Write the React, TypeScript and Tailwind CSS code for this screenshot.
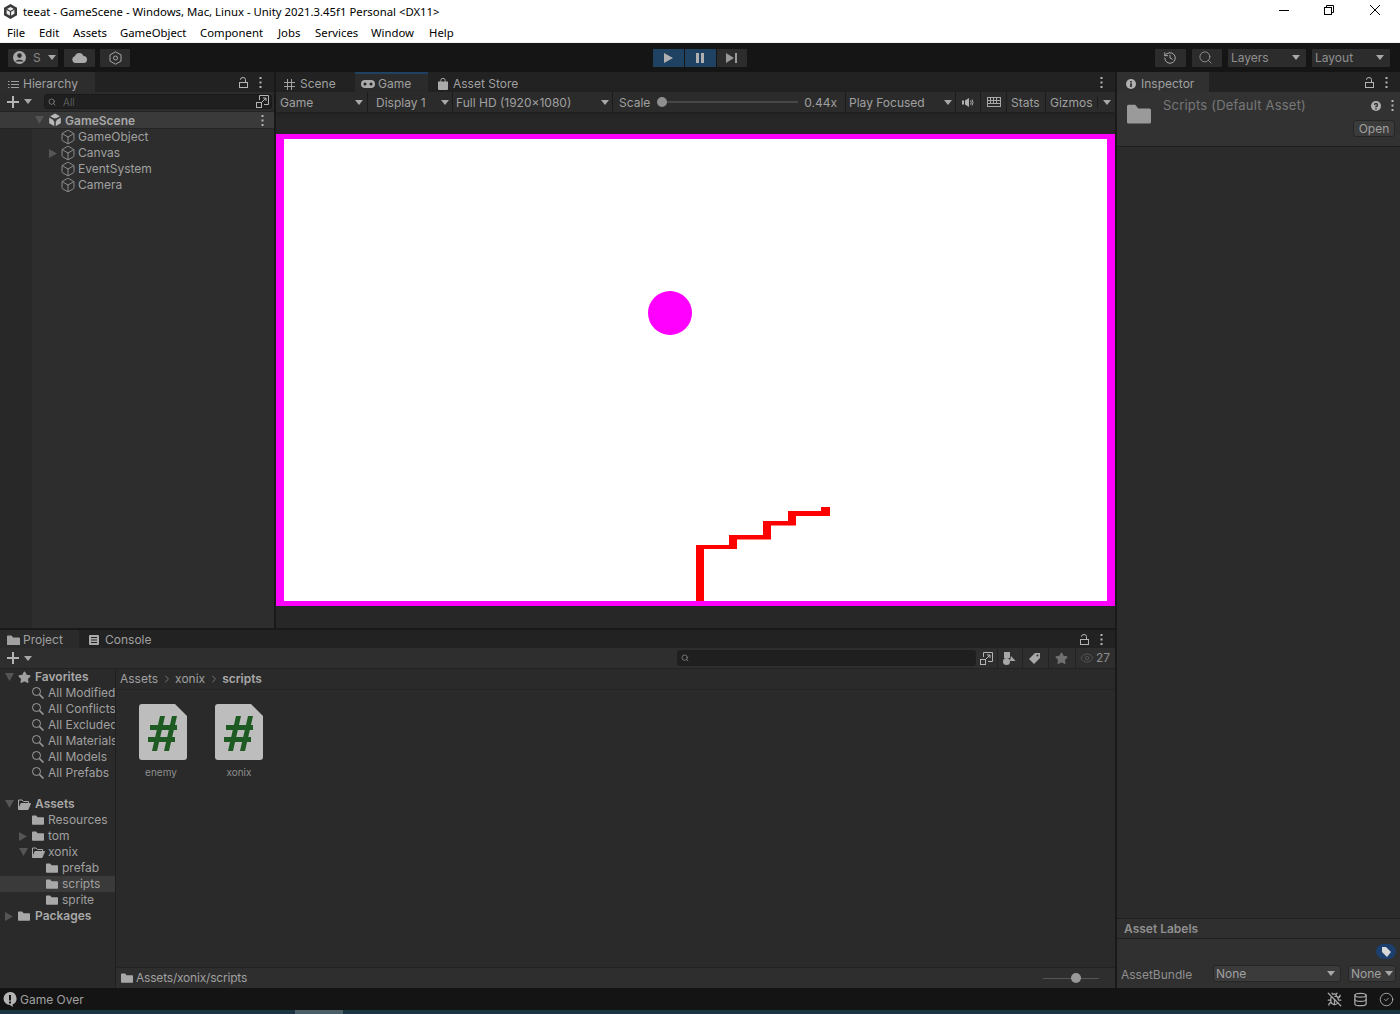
import React from "react";
import { Box, Search, History, BugOff, Database, CircleCheck, Eye, ChevronRight, Star } from "lucide-react";

const Caret = ({ className = "" }: { className?: string }) => (
  <svg width="8" height="5" viewBox="0 0 8 5" className={"shrink-0 " + className}><path d="M0 0h8L4 5z" fill="#a8a8a8" /></svg>
);
const TreeDown = () => (
  <svg width="9" height="8" viewBox="0 0 9 8" className="shrink-0"><path d="M0 0h9L4.500 8z" fill="#555" /></svg>
);
const TreeRight = () => (
  <svg width="8" height="9" viewBox="0 0 8 9" className="shrink-0"><path d="M0 0l8 4.500-8 4.500z" fill="#555" /></svg>
);
const Dots = ({ color = "#b4b4b4" }: { color?: string }) => (
  <svg width="3" height="11" viewBox="0 0 3 11" className="shrink-0"><g fill={color}><rect x="0.5" y="0" width="2" height="2" /><rect x="0.5" y="4.5" width="2" height="2" /><rect x="0.5" y="9" width="2" height="2" /></g></svg>
);
const OpenLock = () => (
  <svg width="9" height="11" viewBox="0 0 9 11" fill="none" stroke="#b4b4b4" className="shrink-0"><rect x="0.5" y="5.5" width="8" height="5" /><path d="M1.500 3V2.500a2.500 2 0 0 1 5 0V5" /></svg>
);
const PlusIcon = () => (
  <svg width="12" height="12" viewBox="0 0 12 12" className="shrink-0"><path d="M5 0h2v5h5v2H7v5H5V7H0V5h5z" fill="#b4b4b4" /></svg>
);
const Folder = ({ size = 12, color = "#a8a8a8" }: { size?: number; color?: string }) => (
  <svg width={size} height={size * 0.8125} viewBox="0 0 16 13" className="shrink-0"><path d="M0 1.500A1 1 0 0 1 1 .5h4.500L7.500 3H15a1 1 0 0 1 1 1v8a1 1 0 0 1-1 1H1a1 1 0 0 1-1-1z" fill={color} /></svg>
);
const FolderOpen = () => (
  <svg width="13" height="11" viewBox="0 0 13 11" className="shrink-0" fill="none" stroke="#a8a8a8"><path d="M.5 10V1h3.500l1.500 1.500h5V4" /><path d="M.5 10.500h9.500L12.500 4.500H3z" fill="#a8a8a8" /></svg>
);
const Magnifier = () => (
  <svg width="12" height="12" viewBox="0 0 12 12" fill="none" stroke="#a0a0a0" className="shrink-0"><circle cx="4.500" cy="4.500" r="4" /><path d="M7.500 7.500L11.500 11.500" strokeWidth="1.500" /></svg>
);
const ExpandBox = () => (
  <svg width="13" height="13" viewBox="0 0 13 13" fill="none" stroke="#b4b4b4" className="shrink-0"><path d="M3.500 5V.5h9v9H8" /><rect x="0.5" y="7.5" width="5" height="5" /><path d="M6 7l4-4M7 3h3v3" /></svg>
);
const UnityMark = ({ size = 14, color = "#c0c0c0", cut = "#2d2d2d" }: { size?: number; color?: string; cut?: string }) => (
  <svg width={size} height={size} viewBox="0 0 14 14" className="shrink-0">
    <path d="M7 .5l5.800 3.200v6.600L7 13.500 1.200 10.300V3.700z" fill={color} />
    <path d="M7 7L7 14M7 7L1 3.500M7 7l6-3.500" stroke={cut} strokeWidth="1.500" />
    <circle cx="7" cy="7" r="1.700" fill={cut} />
  </svg>
);
const TitleLogo = () => (
  <svg width="15" height="15" viewBox="0 0 15 15" className="shrink-0">
    <path d="M7.500 0l6.500 3.700v7.600L7.500 15 1 11.300V3.700z" fill="#3a3a3a" />
    <path d="M7.500 3l3.900 2.200v4.600L7.500 12 3.600 9.800V5.200z" fill="#eee" />
    <path d="M7.500 7.500V12M7.500 7.500L3.600 5.200M7.500 7.500l3.900-2.300" stroke="#3a3a3a" strokeWidth="1.100" />
  </svg>
);

const Row = ({ indent, arrow, arrowGap = 5, icon, gap = 2, label, bold, selected }: { indent: number; arrow?: "down" | "right"; arrowGap?: number; icon: React.ReactNode; gap?: number; label: string; bold?: boolean; selected?: boolean }) => (
  <div className={"h-4 flex items-center relative shrink-0 " + (selected ? "bg-[#3a3a3a]" : "")}>
    <div style={{ width: indent }} className="shrink-0 flex justify-end items-center h-4">
      {arrow === "down" ? <span style={{ marginRight: arrowGap - 1 }}><TreeDown /></span> : arrow === "right" ? <span style={{ marginRight: arrowGap }}><TreeRight /></span> : null}
    </div>
    {icon}
    <span style={{ marginLeft: gap }} className={"whitespace-nowrap " + (bold ? "font-semibold text-[#a8a8a8]" : "text-[#a0a0a0]")}>{label}</span>
  </div>
);

const Cube = () => <Box size={16} color="#a8a8a8" strokeWidth={1.15} className="shrink-0" />;

const ToolBtn = ({ className, children }: { className: string; children?: React.ReactNode }) => (
  <div className={"h-[18px] rounded-[1px] bg-[#2c2c2c] flex items-center shrink-0 " + className}>{children}</div>
);
const Sep = () => <div className="w-px h-5 bg-[#1b1b1b] shrink-0" />;

const ScriptIcon = () => (
  <svg width="48" height="56" viewBox="0 0 48 56" className="shrink-0">
    <path d="M3 0h33l12 12v41a3 3 0 0 1-3 3H3a3 3 0 0 1-3-3V3a3 3 0 0 1 3-3z" fill="#bdbdbd" />
    <g fill="#1e5b22">
      <path d="M21 12h5l-8 35h-5zM33 12h5l-8 35h-5z" />
      <path d="M11 21h27v5H11zM9 33h27v5H9z" />
    </g>
  </svg>
);

const Menu = [["File", 32], ["Edit", 34], ["Assets", 47], ["GameObject", 80], ["Component", 78], ["Jobs", 37], ["Services", 56], ["Window", 58], ["Help", 40]] as const;
const Stairs = [[696, 545, 8, 56], [696, 545, 41, 4], [729, 535, 8, 14], [729, 535, 42, 4.5], [763, 521, 8, 18], [763, 521, 33, 4.5], [788, 511, 8, 14], [788, 511, 42, 5], [821, 507, 9, 9]];

export default function App() {
  return (
    <div className="w-[1400px] h-[1014px] flex flex-col overflow-hidden bg-[#191919] text-[12px] leading-4 text-[#a0a0a0] font-['Inter',sans-serif]">
      {/* Title bar */}
      <div className="h-[22px] bg-white flex items-center shrink-0 pl-[3px] text-black font-['Noto_Sans',sans-serif]">
        <TitleLogo />
        <span className="ml-[5px] pt-px text-[11.35px] whitespace-nowrap">teeat - GameScene - Windows, Mac, Linux - Unity 2021.3.45f1 Personal &lt;DX11&gt;</span>
        <div className="ml-auto flex items-center -mt-[2px] pr-[20px]">
          <svg width="10" height="1" viewBox="0 0 10 1" className="mr-[35px]"><rect width="10" height="1" fill="#000" /></svg>
          <svg width="10" height="10" viewBox="0 0 10 10" fill="none" stroke="#000" className="mr-[36px]"><rect x="0.5" y="2.5" width="7" height="7" /><path d="M2.500 2.500v-2h7v7h-2" /></svg>
          <svg width="10" height="10" viewBox="0 0 10 10" stroke="#000" fill="none"><path d="M0 0l10 10M10 0L0 10" /></svg>
        </div>
      </div>
      {/* Menu */}
      <div className="h-5 bg-white flex items-center shrink-0 pl-[7px] pt-[2px] text-black font-['Noto_Sans',sans-serif] text-[11.35px]">
        {Menu.map(([m, w]) => (
          <span key={m} style={{ width: w }} className="whitespace-nowrap">{m}</span>
        ))}
      </div>
      <div className="h-px bg-[#f0f0f0] shrink-0" />
      {/* Main toolbar */}
      <div className="h-[29px] flex items-center shrink-0 pl-2 bg-[#151515]">
        <ToolBtn className="w-[50px] pl-[5px] gap-[7px]">
          <svg width="13" height="13" viewBox="0 0 13 13"><circle cx="6.5" cy="6.5" r="6.5" fill="#aaa" /><circle cx="6.5" cy="4.6" r="2.3" fill="#2c2c2c" /><path d="M2.5 10.5c.5-2.3 7.500-2.300 8 0z" fill="#2c2c2c" /></svg>
          <span className="text-[#8a8a8a]">S</span>
          <Caret />
        </ToolBtn>
        <ToolBtn className="w-[31px] ml-[6px] justify-center">
          <svg width="15" height="10" viewBox="0 0 15 10"><path d="M3.500 10a3.500 3.500 0 0 1-.5-6.900A4.500 4.500 0 0 1 11.500 3a3.500 3.500 0 0 1 0 7z" fill="#aaa" /></svg>
        </ToolBtn>
        <ToolBtn className="w-[30px] h-5 ml-[5px] justify-center">
          <svg width="13" height="14" viewBox="0 0 13 14" fill="none" stroke="#a5a5a5"><path d="M6.500.8l5.500 3.100v6.200l-5.500 3.100L1 10.100V3.900z" /><circle cx="6.500" cy="7" r="2" /></svg>
        </ToolBtn>
        <div className="w-[523px] shrink-0" />
        <div className="h-[18px] w-[31px] bg-[#1f4263] flex items-center justify-center shrink-0">
          <svg width="9" height="10" viewBox="0 0 9 10"><path d="M0 0l9 5-9 5z" fill="#b0b0b0" /></svg>
        </div>
        <div className="h-[18px] w-[31px] ml-px bg-[#1f4263] flex items-center justify-center shrink-0">
          <svg width="8" height="10" viewBox="0 0 8 10" className="mr-px"><path d="M0 0h3v10H0zM5 0h3v10H5z" fill="#b0b0b0" /></svg>
        </div>
        <ToolBtn className="w-[30px] ml-px justify-center">
          <svg width="11" height="10" viewBox="0 0 11 10" className="mr-px"><path d="M0 0l8 5-8 5zM9 0h2v10H9z" fill="#999" /></svg>
        </ToolBtn>
        <div className="ml-auto flex items-center pr-[10px]">
          <ToolBtn className="w-[31px] justify-center"><History size={14} color="#b0b0b0" strokeWidth={1.6} className="mr-px" /></ToolBtn>
          <ToolBtn className="w-[30px] ml-[6px] justify-center"><Search size={15} color="#a8a8a8" strokeWidth={1.2} className="mr-[3px]" /></ToolBtn>
          <ToolBtn className="w-[78px] ml-[6px] px-[3px] justify-between"><span className="text-[#8f8f8f]">Layers</span><span className="mr-[3px]"><Caret /></span></ToolBtn>
          <ToolBtn className="w-[78px] ml-[6px] px-[3px] justify-between"><span className="text-[#8f8f8f]">Layout</span><span className="mr-[3px]"><Caret /></span></ToolBtn>
        </div>
      </div>

      {/* Work area */}
      <div className="h-[916px] flex shrink-0">
        <div className="w-[1115px] flex flex-col shrink-0">
          <div className="h-[556px] flex shrink-0">
            {/* Hierarchy */}
            <div className="w-[274px] flex flex-col shrink-0 bg-[#2d2d2d]">
              <div className="h-5 bg-[#222222] flex items-stretch shrink-0">
                <div className="w-[95px] bg-[#2d2d2d] rounded-t-[2px] flex items-center pl-[8px] pt-1 gap-[4px]">
                  <svg width="11" height="9" viewBox="0 0 11 9" stroke="#a0a0a0"><path d="M3 1.500h8M3 4.500h8M3 7.500h8M0 1.500h1.500M0 4.500h1.500M0 7.500h1.500" /></svg>
                  <span>Hierarchy</span>
                </div>
                <div className="ml-auto flex items-center gap-[11px] pr-[12px]"><OpenLock /><Dots /></div>
              </div>
              <div className="h-5 bg-[#2c2c2c] flex items-center shrink-0 border-b border-[#232323] pl-[7px]">
                <PlusIcon />
                <span className="ml-[5px]"><Caret /></span>
                <div className="ml-[12px] w-[228px] h-[15px] rounded-[3px] bg-[#1f1f1f] border border-[#1a1a1a] flex items-center pl-[3px] text-[10px] text-[#5c5c5c] relative">
                  <Search size={8} color="#999" strokeWidth={2} />
                  <span className="ml-[7px]">All</span>
                  <span className="absolute right-[2px] top-[0px]"><ExpandBox /></span>
                </div>
              </div>
              <div className="flex-1 flex">
                <div className="w-8 bg-[#282828] shrink-0" />
                <div className="flex-1 flex flex-col -ml-8">
                  <div className="h-[17px] bg-[#3a3a3a] flex items-center relative border-b border-[#242424] shrink-0">
                    <div className="w-[48px] shrink-0 flex justify-end pr-[4px]"><TreeDown /></div>
                    <UnityMark size={14} color="#b8b8b8" cut="#3a3a3a" />
                    <span className="ml-[3px] pt-px font-semibold text-[#a8a8a8]">GameScene</span>
                    <span className="absolute right-[10px] top-[2.5px]"><Dots /></span>
                  </div>
                  <Row indent={60} icon={<Cube />} gap={2} label="GameObject" />
                  <Row indent={60} arrow="right" arrowGap={3} icon={<Cube />} gap={2} label="Canvas" />
                  <Row indent={60} icon={<Cube />} gap={2} label="EventSystem" />
                  <Row indent={60} icon={<Cube />} gap={2} label="Camera" />
                </div>
              </div>
            </div>
            <div className="w-[2px] bg-[#191919] shrink-0" />
            {/* Game view */}
            <div className="flex-1 flex flex-col bg-[#272727] min-w-0">
              <div className="h-5 bg-[#222222] flex items-stretch shrink-0">
                <div className="w-[79px] flex items-center pl-[8px] pt-1 gap-[5px]">
                  <svg width="11" height="11" viewBox="0 0 11 11" stroke="#a0a0a0" fill="none"><path d="M3.500 0v11M7.500 0v11M0 3.500h11M0 7.500h11" /></svg>
                  <span>Scene</span>
                </div>
                <div className="w-[73px] bg-[#2b2b2b] border-t-2 border-[#1f4263] flex items-center pl-[6px] pt-[2px] gap-[3px]">
                  <svg width="14" height="8" viewBox="0 0 14 8"><rect width="14" height="8" rx="4" fill="#aaa" /><circle cx="4" cy="4" r="1.500" fill="#222" /><circle cx="10" cy="4" r="1.500" fill="#222" /></svg>
                  <span>Game</span>
                </div>
                <div className="flex items-center pl-[10px] pt-1 gap-[5px]">
                  <svg width="10" height="12" viewBox="0 0 10 12"><path d="M0 3.500h10V11a1 1 0 0 1-1 1H1a1 1 0 0 1-1-1z" fill="#aaa" /><path d="M2.800 4V2.500a2.200 2.200 0 0 1 4.400 0V4" fill="none" stroke="#aaa" /></svg>
                  <span>Asset Store</span>
                </div>
                <div className="ml-auto flex items-center pr-[12px]"><Dots /></div>
              </div>
              <div className="h-5 bg-[#2b2b2b] flex items-center shrink-0 pl-[4px] shadow-[0_2px_4px_rgba(0,0,0,0.25)]">
                <div className="w-[87px] flex items-center justify-between pr-[4px]"><span className="pt-px">Game</span><Caret /></div>
                <Sep />
                <div className="w-[84px] flex items-center justify-between pl-[8px] pr-[3px]"><span className="pt-px">Display 1</span><Caret /></div>
                <Sep />
                <div className="w-[159px] flex items-center justify-between pl-[3px] pr-[3px]"><span className="pt-px whitespace-nowrap">Full HD (1920x1080)</span><Caret /></div>
                <Sep />
                <div className="w-[232px] flex items-center pl-[6px]">
                  <span className="pt-px">Scale</span>
                  <div className="relative ml-[7px] w-[141px] h-[10px] flex items-center">
                    <div className="w-full h-[2px] bg-[#474747]" />
                    <div className="absolute left-0 w-[10px] h-[10px] rounded-full bg-[#8f8f8f]" />
                  </div>
                  <span className="ml-[6px] pt-px">0.44x</span>
                </div>
                <Sep />
                <div className="w-[109px] flex items-center justify-between pl-[3px] pr-[3px]"><span className="pt-px whitespace-nowrap">Play Focused</span><Caret /></div>
                <Sep />
                <div className="w-[24px] flex items-center justify-center">
                  <svg width="12" height="9" viewBox="0 0 12 9"><path d="M0 2.500h2V6.500H0zM3 2.500L7 0v9L3 6.500z" fill="#b0b0b0" /><path d="M8.500 2.500q1.500 2 0 4M10 1.500q2 3 0 6" stroke="#b0b0b0" fill="none" /></svg>
                </div>
                <Sep />
                <div className="w-[25px] flex items-center justify-center">
                  <svg width="14" height="10" viewBox="0 0 14 10" fill="none" stroke="#a8a8a8"><rect x="0.500" y="0.500" width="13" height="9" /><path d="M0 3.500h14M0 6.500h14M3.500 0v6.500M6.500 0v6.500M9.500 0v6.500" /></svg>
                </div>
                <Sep />
                <div className="w-[38px] pl-[4px] pt-px">Stats</div>
                <Sep />
                <div className="w-[51px] pl-[4px] pt-px">Gizmos</div>
                <div className="w-px h-3 bg-[#1b1b1b]" />
                <div className="w-[17px] flex justify-center"><Caret /></div>
              </div>
              <div className="h-[22px] shrink-0" />
              <div className="h-[472px] shrink-0 bg-white border-x-8 border-y-[5px] border-[#ff00ff] relative">
                <div className="absolute left-[364px] top-[152px] w-11 h-11 rounded-full bg-[#ff00ff]" />
                <svg width="823" height="462" className="absolute left-0 top-0" viewBox="284 139 823 462">
                  {Stairs.map(([x, y, w, h], i) => (
                    <rect key={i} x={x} y={y} width={w} height={h} fill="#ff0000" />
                  ))}
                </svg>
              </div>
              <div className="flex-1" />
            </div>
          </div>
          <div className="h-[2px] bg-[#191919] shrink-0" />
          {/* Project */}
          <div className="flex-1 flex flex-col bg-[#2a2a2a] min-h-0">
            <div className="h-[18px] bg-[#222222] flex items-stretch shrink-0">
              <div className="w-[79px] bg-[#2a2a2a] flex items-center pl-[7px] pt-[2px] gap-[3px]">
                <Folder size={13} color="#a0a0a0" />
                <span>Project</span>
              </div>
              <div className="flex items-center pl-[10px] pt-[2px] gap-[6px]">
                <svg width="10" height="10" viewBox="0 0 10 10"><rect width="10" height="10" rx="1" fill="#aaa" /><path d="M2 2.500h6M2 5h6M2 7.500h6" stroke="#222" /></svg>
                <span>Console</span>
              </div>
              <div className="ml-auto flex items-center gap-[11px] pr-[12px]"><OpenLock /><Dots /></div>
            </div>
            <div className="h-[21px] bg-[#2e2e2e] flex items-center shrink-0 border-b border-[#232323] pl-[7px]">
              <PlusIcon />
              <span className="ml-[5px]"><Caret /></span>
              <div className="ml-[645px] w-[299px] h-4 rounded-[3px] bg-[#1f1f1f] flex items-center pl-[4px] relative">
                <Search size={8} color="#999" strokeWidth={2} />
              </div>
              <div className="w-[20px] flex justify-center"><ExpandBox /></div>
              <div className="w-px h-5 bg-[#232323] ml-px" />
              <div className="w-[24px] flex justify-center pr-[2px]">
                <svg width="13" height="13" viewBox="0 0 13 13" fill="#a8a8a8"><rect x="1" y="0" width="6" height="6" /><circle cx="3.500" cy="9.500" r="3.500" /><path d="M8 4l4.500 5H7z" /></svg>
              </div>
              <div className="w-px h-5 bg-[#232323]" />
              <div className="w-[25px] flex justify-center pr-[2px]">
                <svg width="11" height="11" viewBox="0 0 11 11"><path d="M6 0h5v5l-6 6-5-5z" fill="#a8a8a8" /><circle cx="8.500" cy="2.500" r="1" fill="#2e2e2e" /></svg>
              </div>
              <div className="w-px h-5 bg-[#232323]" />
              <div className="w-[26px] flex justify-center pr-[2px]"><Star size={13} color="#707070" fill="#707070" /></div>
              <div className="w-px h-5 bg-[#232323]" />
              <div className="flex items-center ml-[4px] gap-[2px]">
                <Eye size={14} color="#555" strokeWidth={1.6} />
                <span className="text-[#8f8f8f]">27</span>
              </div>
            </div>
            <div className="flex-1 flex min-h-0">
              <div className="w-[115px] shrink-0 flex flex-col overflow-hidden">
                <Row indent={18} arrow="down" icon={<Star size={13} color="#a0a0a0" fill="#a0a0a0" className="shrink-0" />} gap={4} label="Favorites" bold />
                {["All Modified", "All Conflicts", "All Excluded", "All Materials", "All Models", "All Prefabs"].map((l) => (
                  <Row key={l} indent={32} icon={<Magnifier />} gap={4} label={l} />
                ))}
                <div className="h-[15px] shrink-0" />
                <Row indent={18} arrow="down" icon={<FolderOpen />} gap={4} label="Assets" bold />
                <Row indent={32} icon={<Folder />} gap={4} label="Resources" />
                <Row indent={32} arrow="right" icon={<Folder />} gap={4} label="tom" />
                <Row indent={32} arrow="down" icon={<FolderOpen />} gap={3} label="xonix" />
                <Row indent={46} icon={<Folder />} gap={4} label="prefab" />
                <Row indent={46} icon={<Folder />} gap={4} label="scripts" selected />
                <Row indent={46} icon={<Folder />} gap={4} label="sprite" />
                <Row indent={18} arrow="right" icon={<Folder />} gap={5} label="Packages" bold />
              </div>
              <div className="w-px bg-[#1f1f1f] shrink-0" />
              <div className="flex-1 flex flex-col min-w-0">
                <div className="h-[21px] shrink-0 border-b border-[#232323] flex items-center pl-[4px]">
                  <span>Assets</span>
                  <ChevronRight size={12} color="#777" className="ml-[3px] mr-[2px]" />
                  <span>xonix</span>
                  <ChevronRight size={12} color="#777" className="ml-[3px] mr-[2px]" />
                  <span className="font-semibold text-[#a8a8a8]">scripts</span>
                </div>
                <div className="flex-1 flex items-start pt-[14px] pl-[23px] gap-[28px]">
                  <div className="flex flex-col items-center w-[48px]"><ScriptIcon /><span className="text-[10px] mt-[5px] mr-[4px] leading-[14px] text-[#8f8f8f]">enemy</span></div>
                  <div className="flex flex-col items-center w-[48px]"><ScriptIcon /><span className="text-[10px] mt-[5px] leading-[14px] text-[#8f8f8f]">xonix</span></div>
                </div>
                <div className="h-[21px] shrink-0 border-t border-[#232323] bg-[#2e2e2e] flex items-center pl-[5px] gap-[3px]">
                  <Folder size={12} />
                  <span className="tracking-[-0.2px]">Assets/xonix/scripts</span>
                  <div className="ml-auto mr-[16px] w-[56px] h-[10px] relative flex items-center">
                    <div className="w-full h-px bg-[#555]" />
                    <div className="absolute left-[28px] w-[10px] h-[10px] rounded-full bg-[#999]" />
                  </div>
                </div>
              </div>
            </div>
          </div>
        </div>
        <div className="w-[2px] bg-[#191919] shrink-0" />
        {/* Inspector */}
        <div className="flex-1 flex flex-col bg-[#2b2b2b] min-w-0">
          <div className="h-5 bg-[#222222] flex items-stretch shrink-0">
            <div className="w-[92px] bg-[#303030] flex items-center pl-[9px] pt-1 gap-[5px]">
              <svg width="10" height="10" viewBox="0 0 10 10"><circle cx="5" cy="5" r="5" fill="#b0b0b0" /><rect x="4.200" y="2" width="1.600" height="1.500" fill="#222" /><rect x="4.200" y="4.300" width="1.600" height="3.700" fill="#222" /></svg>
              <span>Inspector</span>
            </div>
            <div className="ml-auto flex items-center gap-[11px] pr-[12px]"><OpenLock /><Dots /></div>
          </div>
          <div className="h-[55px] bg-[#323232] border-b border-[#1f1f1f] shrink-0 relative flex pl-[10px] pt-[12px]">
            <Folder size={24} color="#9a9a9a" />
            <span className="ml-[12px] -mt-[7px] text-[13px] text-[#777] tracking-[0.2px] whitespace-nowrap">Scripts (Default Asset)</span>
            <div className="absolute right-[6px] top-[8px] flex items-center gap-[10px]">
              <svg width="10" height="10" viewBox="0 0 10 10"><circle cx="5" cy="5" r="5" fill="#b0b0b0" /><path d="M3.500 4a1.500 1.500 0 1 1 1.500 1.500V6.500" stroke="#323232" fill="none" strokeWidth="1.400" /><rect x="4.300" y="7.200" width="1.400" height="1.400" fill="#323232" /></svg>
              <Dots />
            </div>
            <div className="absolute right-[5px] top-[28px] w-[42px] h-[17px] rounded-[3px] bg-[#3b3b3b] border border-[#262626] flex items-center justify-center text-[#a0a0a0]">Open</div>
          </div>
          <div className="flex-1" />
          <div className="h-[21px] bg-[#2f2f2f] border-y border-[#1f1f1f] flex items-center pl-[7px] font-semibold text-[#8f8f8f] shrink-0">Asset Labels</div>
          <div className="h-[49px] bg-[#303030] shrink-0 relative">
            <div className="absolute right-[4px] top-[5px] w-5 h-[15px] rounded-full bg-[#1d3f6e] flex items-center justify-center">
              <svg width="10" height="10" viewBox="0 0 10 10"><path d="M1 0h4l5 5-4 5-5-5z" fill="#d8d8d8" /></svg>
            </div>
            <div className="absolute left-[4px] right-[4px] bottom-[5px] flex items-center">
              <span className="text-[#8f8f8f] w-[92px] shrink-0 pt-[3px]">AssetBundle</span>
              <div className="w-[128px] h-[17px] rounded-[3px] bg-[#3b3b3b] border border-[#262626] flex items-center justify-between px-[2px]"><span className="pt-px">None</span><span className="mr-[3px]"><Caret /></span></div>
              <div className="ml-[7px] flex-1 h-[17px] rounded-[3px] bg-[#3b3b3b] border border-[#262626] flex items-center justify-between px-[2px]"><span className="pt-px">None</span><Caret /></div>
            </div>
          </div>
        </div>
      </div>

      {/* Status */}
      <div className="h-[22px] bg-[#141414] flex items-center shrink-0 pl-[3px]">
        <svg width="14" height="15" viewBox="0 0 14 15"><path d="M7 0a6.500 6.500 0 0 1 2.500 12.500L10 15l-3-2A6.500 6.500 0 0 1 7 0z" fill="#b4b4b4" /><rect x="6" y="3" width="2" height="5.500" fill="#141414" /><rect x="6" y="9.500" width="2" height="2" fill="#141414" /></svg>
        <span className="ml-[3px] pt-[2px]">Game Over</span>
        <div className="ml-auto flex items-center gap-[11px] pr-[6px]">
          <BugOff size={15} color="#a8a8a8" />
          <Database size={15} color="#a8a8a8" />
          <CircleCheck size={15} color="#a8a8a8" strokeWidth={1.5} />
        </div>
      </div>
      <div className="flex-1 bg-[#1a3442] relative">
        <div className="absolute left-[295px] w-12 h-full bg-[#4c5e68]" />
      </div>
    </div>
  );
}
